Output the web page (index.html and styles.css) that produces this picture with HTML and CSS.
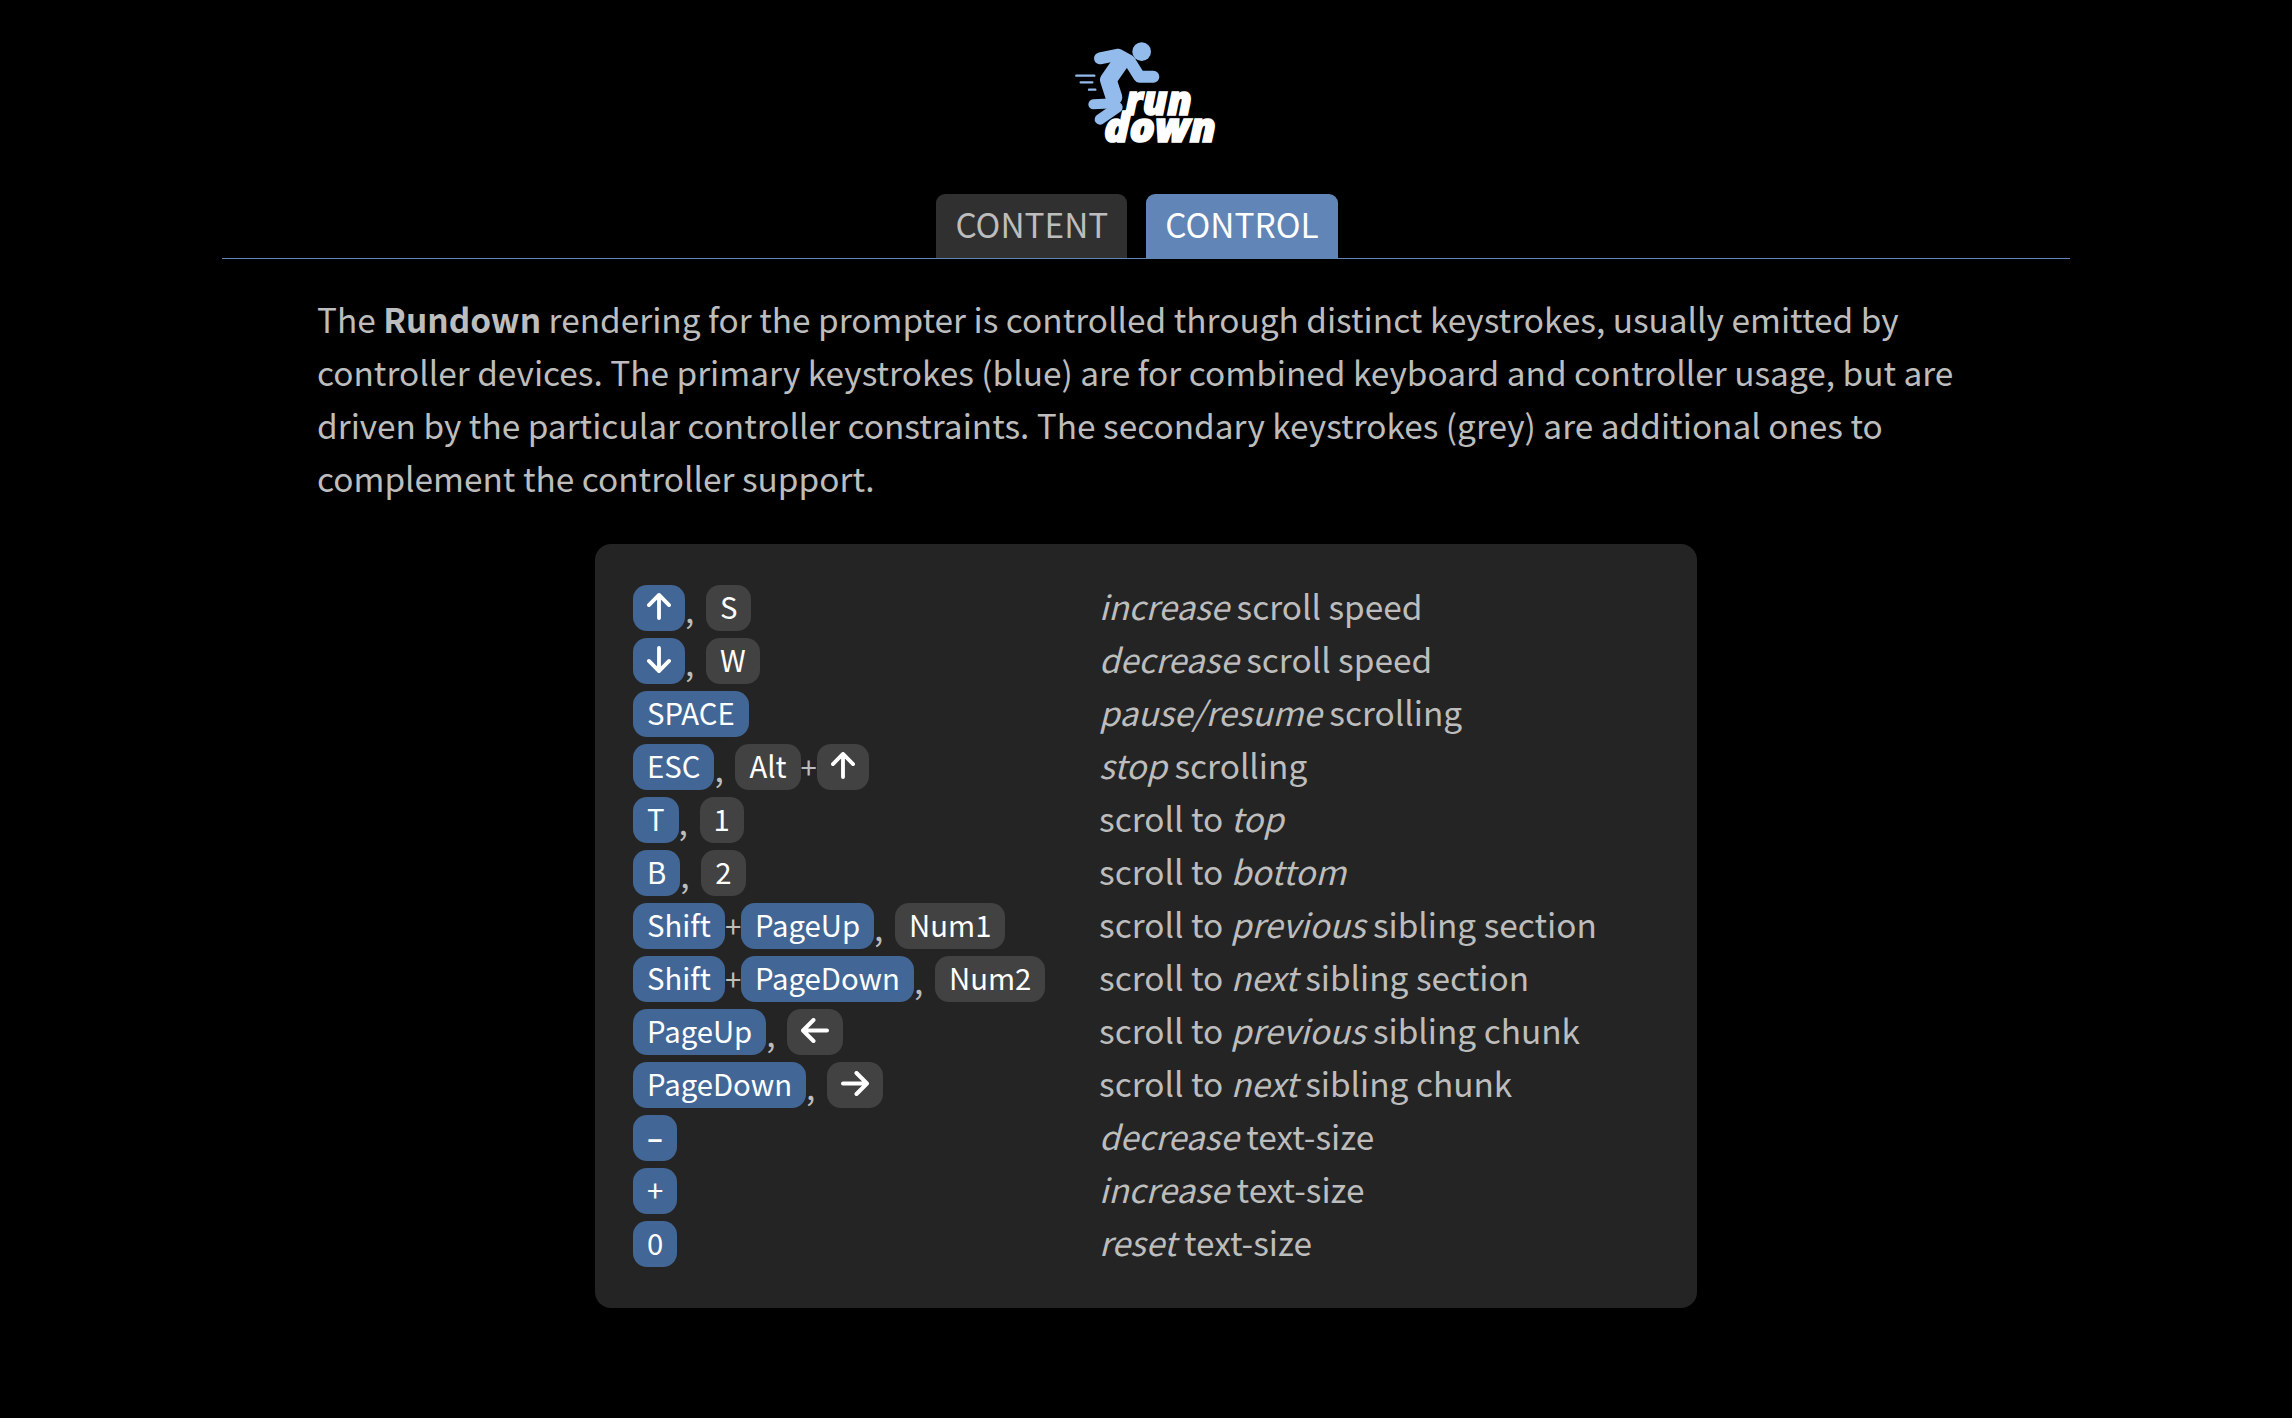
FILE: index.html
```html
<!DOCTYPE html>
<html lang="en">
<head>
  <meta charset="UTF-8">
  <title>Rundown</title>
  <link rel="stylesheet" href="styles.css">
</head>
<body>

  <!-- Logo -->
  <header class="logo">
    <svg viewBox="0 0 630 420" width="210" height="140">
      <g fill="none" stroke="#93bbec" stroke-linecap="round" stroke-linejoin="round">
        <path stroke-width="7" d="M109 167H163M122 187H157M147 209H166"/>
        <path stroke-width="36" d="M180 115L235 104L268 122L298 170L340 170"/>
        <path stroke-width="50" d="M245 122L205 180L222 232"/>
        <path stroke-width="30" d="M160 253L225 250"/>
        <path stroke-width="32" d="M232 262L180 298"/>
      </g>
      <circle cx="305" cy="95" r="28" fill="#93bbec"/>
      <text class="logo-text" x="256" y="284" textLength="200" lengthAdjust="spacingAndGlyphs">run</text>
      <text class="logo-text" x="192" y="366" textLength="336" lengthAdjust="spacingAndGlyphs">down</text>
    </svg>
  </header>

  <nav class="tabs">
    <a class="tab">CONTENT</a>
    <a class="tab active">CONTROL</a>
  </nav>

  <main class="content">
    <p class="intro">The <b>Rundown</b> rendering for the prompter is controlled through distinct keystrokes, usually emitted by controller devices. The primary keystrokes (blue) are for combined keyboard and controller usage, but are driven by the particular controller constraints. The secondary keystrokes (grey) are additional ones to complement the controller support.</p>

    <div class="card">
      <div class="keys"><kbd class="key blue"><svg class="arrow" viewBox="0 0 25 28"><path d="M12.500 26V3M2 12.500L12.500 2L23 12.500"/></svg></kbd><span class="sep">,</span><kbd class="key">S</kbd></div>
      <div class="desc"><i>increase</i> scroll speed</div>

      <div class="keys"><kbd class="key blue"><svg class="arrow" viewBox="0 0 25 28"><path d="M12.500 2V25M2 15.500L12.500 26L23 15.500"/></svg></kbd><span class="sep">,</span><kbd class="key">W</kbd></div>
      <div class="desc"><i>decrease</i> scroll speed</div>

      <div class="keys"><kbd class="key blue">SPACE</kbd></div>
      <div class="desc"><i>pause/resume</i> scrolling</div>

      <div class="keys"><kbd class="key blue">ESC</kbd><span class="sep">,</span><kbd class="key">Alt</kbd><span class="plus">+</span><kbd class="key"><svg class="arrow" viewBox="0 0 25 28"><path d="M12.500 26V3M2 12.500L12.500 2L23 12.500"/></svg></kbd></div>
      <div class="desc"><i>stop</i> scrolling</div>

      <div class="keys"><kbd class="key blue">T</kbd><span class="sep">,</span><kbd class="key">1</kbd></div>
      <div class="desc">scroll to <i>top</i></div>

      <div class="keys"><kbd class="key blue">B</kbd><span class="sep">,</span><kbd class="key">2</kbd></div>
      <div class="desc">scroll to <i>bottom</i></div>

      <div class="keys"><kbd class="key blue">Shift</kbd><span class="plus">+</span><kbd class="key blue">PageUp</kbd><span class="sep">,</span><kbd class="key">Num1</kbd></div>
      <div class="desc">scroll to <i>previous</i> sibling section</div>

      <div class="keys"><kbd class="key blue">Shift</kbd><span class="plus">+</span><kbd class="key blue">PageDown</kbd><span class="sep">,</span><kbd class="key">Num2</kbd></div>
      <div class="desc">scroll to <i>next</i> sibling section</div>

      <div class="keys"><kbd class="key blue">PageUp</kbd><span class="sep">,</span><kbd class="key"><svg class="arrow arrow-wide" viewBox="0 0 28 25"><path d="M26 12.500H3M12.500 2L2 12.500L12.500 23"/></svg></kbd></div>
      <div class="desc">scroll to <i>previous</i> sibling chunk</div>

      <div class="keys"><kbd class="key blue">PageDown</kbd><span class="sep">,</span><kbd class="key"><svg class="arrow arrow-wide" viewBox="0 0 28 25"><path d="M2 12.500H25M15.500 2L26 12.500L15.500 23"/></svg></kbd></div>
      <div class="desc">scroll to <i>next</i> sibling chunk</div>

      <div class="keys"><kbd class="key blue"><b class="minus">–</b></kbd></div>
      <div class="desc"><i>decrease</i> text-size</div>

      <div class="keys"><kbd class="key blue">+</kbd></div>
      <div class="desc"><i>increase</i> text-size</div>

      <div class="keys"><kbd class="key blue">0</kbd></div>
      <div class="desc"><i>reset</i> text-size</div>
    </div>
  </main>

</body>
</html>
```

FILE: styles.css
```css
body {
  margin: 0;
  background: #000;
  color: #bdbdbd;
  font-family: "Noto Sans CJK SC", "Noto Sans", sans-serif;
  font-size: 33.4px;
  line-height: 53px;
}

.logo {
  display: flex;
  justify-content: center;
  padding-top: 20px;
  height: 194px;
  box-sizing: border-box;
}

.logo svg {
  display: block;
  margin-left: -2px;
}

.logo-text {
  fill: #fff;
  stroke: #fff;
  stroke-width: 5px;
  font-family: "Open Sans", sans-serif;
  font-size: 122px;
  font-weight: 800;
  font-style: italic;
}

.tabs {
  display: flex;
  justify-content: center;
  gap: 19px;
  margin: 0 222px;
  padding-right: 18px;
  border-bottom: 1px solid #6085b6;
}

.tab {
  height: 64px;
  padding: 0 19px;
  line-height: 60px;
  background: #303030;
  border-radius: 9px 9px 0 0;
}

.tab.active {
  background: #6085b6;
  color: #fff;
}

.content {
  padding: 33px 317px 0;
}

.intro {
  margin: 0 0 40px;
}

.card {
  display: grid;
  grid-template-columns: 466px 1fr;
  width: 1102px;
  box-sizing: border-box;
  margin: 0 auto;
  padding: 41px 38px 34px;
  background: #242424;
  border-radius: 16px;
}

.keys {
  display: flex;
  align-items: flex-start;
  height: 53px;
}

.key {
  display: flex;
  align-items: center;
  box-sizing: border-box;
  height: 46px;
  padding: 0 14px 3px;
  background: #424242;
  border-radius: 14px;
  color: #fff;
  font-family: inherit;
  font-size: 29.3px;
  line-height: 43px;
}

.key.blue {
  background: #426796;
}

.minus {
  font-weight: 700;
}

.sep {
  width: 20px;
  flex: none;
  margin-right: 1px;
  line-height: 48px;
}

.plus {
  width: 16px;
  flex: none;
  text-align: center;
  font-size: 29.3px;
  line-height: 44px;
}

.arrow {
  width: 24px;
  height: 27px;
  fill: none;
  stroke: #fff;
  stroke-width: 4;
  stroke-linecap: round;
  stroke-linejoin: round;
}

.arrow-wide {
  width: 28px;
  height: 25px;
}

.desc {
  height: 53px;
  line-height: 41px;
}
```
